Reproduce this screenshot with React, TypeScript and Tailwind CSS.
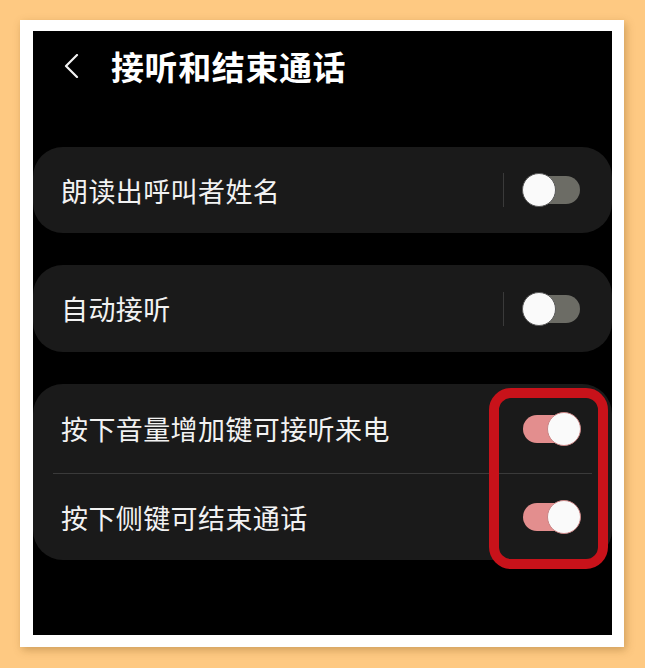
import React from "react";

function Toggle({ on }: { on: boolean }) {
  return (
    <div
      className={
        "relative w-[57px] h-[28px] rounded-full " +
        (on ? "bg-[#e38e8e]" : "bg-[#6c6c65]")
      }
    >
      <div
        className={
          "absolute top-1/2 -translate-y-1/2 w-[34px] h-[34px] rounded-full bg-[#fafafa] border " +
          (on ? "right-[-1px] border-[#c98585]" : "left-[-1px] border-[#5a5a5a]")
        }
      />
    </div>
  );
}

function Row({
  label,
  on,
  divider,
  h,
}: {
  label: string;
  on: boolean;
  divider?: boolean;
  h: string;
}) {
  return (
    <div className={"flex items-center justify-between pl-[28px] pr-[32px] " + h}>
      <span className="text-[27px] tracking-[0.4px] text-[#f2f2f2] leading-none">
        {label}
      </span>
      <div className="flex items-center">
        {divider && <div className="w-px h-[34px] bg-[#3a3a3a] mr-[19px]" />}
        <Toggle on={on} />
      </div>
    </div>
  );
}

export default function App() {
  return (
    <div
      className="w-[645px] h-[668px] bg-[#fec982] pt-[20px] pl-[20px]"
      style={{ fontFamily: '"Noto Sans CJK SC", "Noto Sans", sans-serif' }}
    >
      <div className="w-[604px] h-[627px] bg-white pt-[11px] pl-[13px] shadow-[2px_3px_8px_rgba(120,80,20,0.35)]">
        <div className="relative w-[579px] h-[604px] bg-black">
          <div className="flex items-center h-[70px] pl-[30px]">
            <svg width="16" height="24" viewBox="0 0 16 24" className="mr-[32px]">
              <path
                d="M14 1 L3 12 L14 23"
                stroke="#f2f2f2"
                strokeWidth="2.2"
                fill="none"
                strokeLinecap="round"
                strokeLinejoin="round"
              />
            </svg>
            <span className="text-[33px] font-bold tracking-[0.6px] text-white leading-none">
              接听和结束通话
            </span>
          </div>

          <div className="mt-[46px] flex flex-col gap-[32px]">
            <div className="bg-[#1a1a1a] rounded-[30px]">
              <Row label="朗读出呼叫者姓名" on={false} divider h="h-[86px]" />
            </div>
            <div className="bg-[#1a1a1a] rounded-[30px]">
              <Row label="自动接听" on={false} divider h="h-[87px]" />
            </div>
            <div className="bg-[#1a1a1a] rounded-[30px]">
              <Row label="按下音量增加键可接听来电" on h="h-[89px]" />
              <div className="mx-[20px] h-px bg-[#3a3a3a]" />
              <Row label="按下侧键可结束通话" on h="h-[86px]" />
            </div>
          </div>

          <div className="absolute left-[456px] top-[357px] w-[119px] h-[181px] rounded-[22px] border-[10px] border-[#c8121a]" />
        </div>
      </div>
    </div>
  );
}
